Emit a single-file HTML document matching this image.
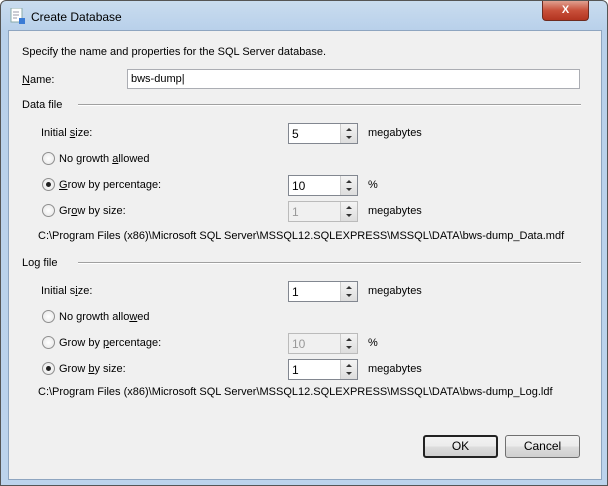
<!DOCTYPE html><html><head><style>
body{margin:0;width:608px;height:486px;overflow:hidden;font:11px "Liberation Sans",sans-serif;color:#000;background:#fff}
.win{position:absolute;left:0;top:0;width:606px;height:484px;border:1px solid #555;border-radius:6px 6px 0 0;background:linear-gradient(180deg,#c9dcef 0,#b8d0ea 30px,#bcd3ec 100%)}
.client{position:absolute;left:7px;top:29px;width:592px;height:448px;background:#f0f0f0;border:1px solid #8ea5c0}
.t{position:absolute;white-space:nowrap;font-size:11px}
.tb{position:absolute;background:#fff;border:1px solid #abadb3;box-sizing:border-box;height:20px;font-size:11px;padding:3px 3px}
.spin{position:absolute;width:70px;height:21px;box-sizing:border-box;border:1px solid #828790;background:#fff;padding:3px 3px;font-size:12px}
.spin.d{background:#f0f0f0;color:#999;border-color:#bbb}
.spin i{position:absolute;right:0;top:0;width:16px;height:19px;border-left:1px solid #ccc;background:linear-gradient(#f4f4f4,#ddd)}
.spin i:before{content:"";position:absolute;left:5px;top:4px;border:3px solid transparent;border-bottom:3px solid #333;border-top:0}
.spin i:after{content:"";position:absolute;left:5px;top:12px;border:3px solid transparent;border-top:3px solid #333;border-bottom:0}
.r{position:absolute;width:11px;height:11px;border:1px solid #8f8f8f;border-radius:50%;background:radial-gradient(#fff,#e4e4e4)}
.r.on:after{content:"";position:absolute;left:3px;top:3px;width:5px;height:5px;border-radius:50%;background:#222}
.line{position:absolute;height:1px;background:#a0a0a0;border-bottom:1px solid #fff}
.btn{position:absolute;width:75px;height:23px;box-sizing:border-box;border:1px solid #707070;border-radius:3px;background:linear-gradient(#f2f2f2,#ebebeb 50%,#dddddd 51%,#cfcfcf);text-align:center;line-height:21px;font-size:12px}
u{text-decoration:underline}
</style></head><body>
<div class="win">
<svg style="position:absolute;left:9px;top:7px" width="16" height="16"><rect x="1" y="0" width="11" height="14" fill="#fff" stroke="#8aa"/><path d="M3 4h6M3 7h6M3 10h4" stroke="#99a"/><rect x="9" y="10" width="6" height="6" fill="#3a7bd5"/></svg>
<div class="t" style="left:30px;top:9px;font-size:12px">Create Database</div>
<div style="position:absolute;left:541px;top:0;width:45px;height:19px;border:1px solid #6d2b20;border-top:0;border-radius:0 0 4px 4px;background:linear-gradient(#e0a090,#c8503a 50%,#b33420);color:#fff;font-weight:bold;text-align:center;line-height:18px;font-size:11px">X</div>
<div class="client"></div>
</div>
<div class="t" style="left:22px;top:46px">Specify the name and properties for the SQL Server database.</div>
<div class="t" style="left:22px;top:74px"><u>N</u>ame:</div>
<div class="tb" style="left:127px;top:69px;width:453px">bws-dump|</div>
<div class="t" style="left:22px;top:99px">Data file</div><div class="line" style="left:78px;top:104px;width:503px"></div>
<div class="t" style="left:41px;top:127px">Initial <u>s</u>ize:</div>
<div class="spin" style="left:288px;top:123px">5<i></i></div><div class="t" style="left:368px;top:127px">megabytes</div>
<div class="r" style="left:42px;top:152px"></div><div class="t" style="left:59px;top:153px">No growth <u>a</u>llowed</div>
<div class="r on" style="left:42px;top:178px"></div><div class="t" style="left:59px;top:179px"><u>G</u>row by percentage:</div>
<div class="spin" style="left:288px;top:175px">10<i></i></div><div class="t" style="left:368px;top:179px">%</div>
<div class="r" style="left:42px;top:204px"></div><div class="t" style="left:59px;top:205px">Gr<u>o</u>w by size:</div>
<div class="spin d" style="left:288px;top:201px">1<i></i></div><div class="t" style="left:368px;top:205px">megabytes</div>
<div class="t" style="left:38px;top:230px">C:\Program Files (x86)\Microsoft SQL Server\MSSQL12.SQLEXPRESS\MSSQL\DATA\bws-dump_Data.mdf</div>
<div class="t" style="left:22px;top:257px">Log file</div><div class="line" style="left:78px;top:262px;width:503px"></div>
<div class="t" style="left:41px;top:285px">Initial s<u>i</u>ze:</div>
<div class="spin" style="left:288px;top:281px">1<i></i></div><div class="t" style="left:368px;top:285px">megabytes</div>
<div class="r" style="left:42px;top:310px"></div><div class="t" style="left:59px;top:311px">No growth allo<u>w</u>ed</div>
<div class="r" style="left:42px;top:336px"></div><div class="t" style="left:59px;top:337px">Grow by <u>p</u>ercentage:</div>
<div class="spin d" style="left:288px;top:333px">10<i></i></div><div class="t" style="left:368px;top:337px">%</div>
<div class="r on" style="left:42px;top:362px"></div><div class="t" style="left:59px;top:363px">Grow <u>b</u>y size:</div>
<div class="spin" style="left:288px;top:359px">1<i></i></div><div class="t" style="left:368px;top:363px">megabytes</div>
<div class="t" style="left:38px;top:386px">C:\Program Files (x86)\Microsoft SQL Server\MSSQL12.SQLEXPRESS\MSSQL\DATA\bws-dump_Log.ldf</div>
<div class="btn" style="left:423px;top:435px;border:2px solid #222;line-height:19px">OK</div>
<div class="btn" style="left:505px;top:435px">Cancel</div>
</body></html>
